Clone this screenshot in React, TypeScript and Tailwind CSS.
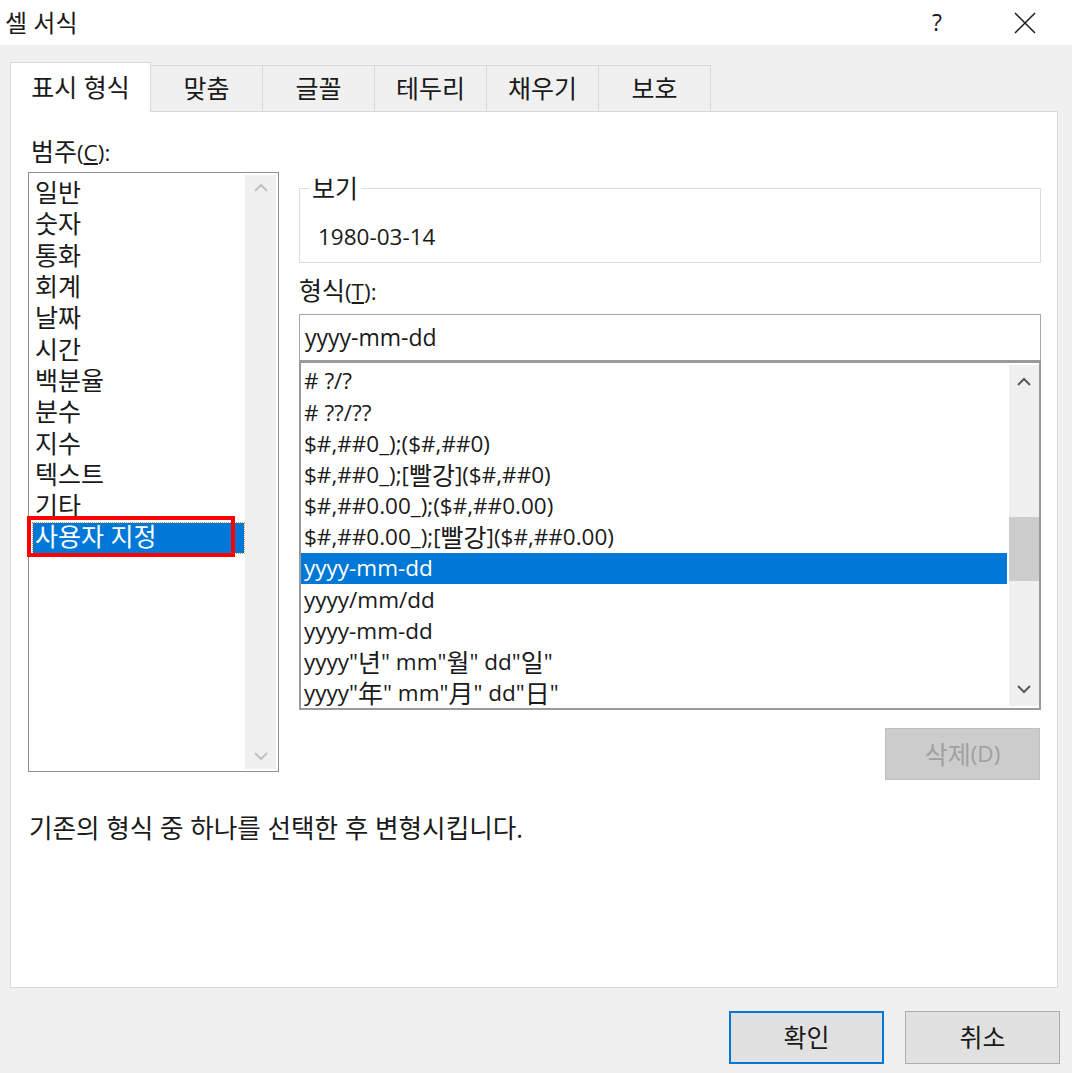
import React from "react";

const font = { fontFamily: '"Open Sans", "Noto Sans CJK KR", sans-serif' };

const categories = ["일반", "숫자", "통화", "회계", "날짜", "시간", "백분율", "분수", "지수", "텍스트", "기타", "사용자 지정"];

const formats = [
  "# ?/?",
  "# ??/??",
  "$#,##0_);($#,##0)",
  "$#,##0_);[빨강]($#,##0)",
  "$#,##0.00_);($#,##0.00)",
  "$#,##0.00_);[빨강]($#,##0.00)",
  "yyyy-mm-dd",
  "yyyy/mm/dd",
  "yyyy-mm-dd",
  'yyyy"년" mm"월" dd"일"',
  'yyyy"年" mm"月" dd"日"',
];

const tabs = ["맞춤", "글꼴", "테두리", "채우기", "보호"];

// Hangul / CJK runs get a slightly larger size so they sit like Malgun Gothic next to Latin text
function K({ text }: { text: string }) {
  const parts = text.split(/([\uAC00-\uD7A3\u3131-\u318E\u4E00-\u9FFF ]*[\uAC00-\uD7A3\u3131-\u318E\u4E00-\u9FFF]+)/);
  return (
    <>
      {parts.map((p, i) =>
        /[\uAC00-\uD7A3\u3131-\u318E\u4E00-\u9FFF]/.test(p) ? (
          <span key={i} className="text-[1.11em]">
            {p}
          </span>
        ) : (
          <React.Fragment key={i}>{p}</React.Fragment>
        )
      )}
    </>
  );
}

function Chevron({ up, color }: { up?: boolean; color: string }) {
  return (
    <svg width="16" height="10" viewBox="0 0 16 10">
      <polyline
        points={up ? "2,8 8,2 14,8" : "2,2 8,8 14,2"}
        fill="none"
        stroke={color}
        strokeWidth="2"
      />
    </svg>
  );
}

export default function App() {
  return (
    <div className="w-[1072px] h-[1073px] bg-[#f0f0f0] text-[#1a1a1a] overflow-hidden text-[22.5px]" style={font}>
      {/* Title bar */}
      <div className="h-[45px] bg-white flex items-center">
        <span className="pl-[5px] text-[24px] leading-none">셀 서식</span>
        <span className="ml-auto text-[23px] leading-none mr-[72px]">?</span>
        <svg width="22" height="22" viewBox="0 0 22 22" className="mr-[36px]">
          <path d="M1 1 L21 21 M21 1 L1 21" stroke="#1a1a1a" strokeWidth="1.5" />
        </svg>
      </div>

      {/* Tabs */}
      <div className="flex items-end pl-[10px] pt-[17px] h-[66px]">
        <div className="w-[141px] h-[50px] bg-white border border-b-0 border-[#d9d9d9] flex items-center justify-center text-[25px] leading-none relative z-10 -mb-px">
          표시 형식
        </div>
        {tabs.map((t) => (
          <div
            key={t}
            className="w-[112px] h-[46px] border border-l-0 border-b-0 border-[#d9d9d9] flex items-center justify-center text-[25px] leading-none"
          >
            {t}
          </div>
        ))}
      </div>

      {/* Panel */}
      <div className="mx-[10px] w-[1048px] h-[877px] bg-white border border-[#d9d9d9]">
        <div className="flex pl-[17px] pt-[25px]">
          {/* Left column */}
          <div className="w-[251px]">
            <div className="leading-[28px] h-[28px] pl-[3px]">
              <span className="text-[1.11em]">범주</span>(<span className="underline underline-offset-2">C</span>):
            </div>
            <div className="mt-[7px] h-[600px] border border-[#8e8f8f] flex">
              <div className="flex-1 pl-[5px] pt-[4px]">
                {categories.map((c, i) =>
                  i === categories.length - 1 ? (
                    <div key={c} className="relative h-[31.3px] flex items-center">
                      <div className="absolute left-[-1px] w-[211px] top-[2px] bottom-[0px] bg-[#0078d7] outline-1 outline-dotted outline-[#e0a050]" />
                      <span className="relative text-white text-[25px] leading-none pl-[1px]">{c}</span>
                      <div className="absolute left-[-7px] top-[-5px] w-[208px] h-[41px] border-[4px] border-[#ff0000]" />
                    </div>
                  ) : (
                    <div key={c} className="h-[31.3px] flex items-center text-[25px] leading-none pl-[1px]">
                      {c}
                    </div>
                  )
                )}
              </div>
              <div className="w-[31px] my-[2px] mr-[2px] bg-[#f0f0f0] flex flex-col items-center justify-between py-[8px]">
                <Chevron up color="#c2c2c2" />
                <Chevron color="#c2c2c2" />
              </div>
            </div>
          </div>

          {/* Right column */}
          <div className="ml-[20px] w-[742px] pt-[39px]">
            <fieldset className="border border-[#dcdcdc] h-[87px] pl-[18px]">
              <legend className="text-[25px] leading-[24px] px-[3px] ml-[-9px]">보기</legend>
              <div className="leading-none pt-[26px]">1980-03-14</div>
            </fieldset>
            <div className="leading-[28px] h-[28px] mt-[13px]">
              <span className="text-[1.11em]">형식</span>(<span className="underline underline-offset-2">T</span>):
            </div>
            <div className="mt-[10px] h-[46px] border border-[#a8a8a8] border-b-0 flex items-center pl-[5px] text-[23px]">
              yyyy-mm-dd
            </div>
            <div className="h-[350px] border-2 border-[#9a9a9a] border-t-[3px] flex">
              <div className="flex-1 pt-[3px]">
                {formats.map((f, i) => (
                  <div
                    key={i}
                    className={`h-[31.2px] flex items-center pl-[3px] leading-none whitespace-nowrap ${
                      i === 6 ? "bg-[#0078d7] text-white" : ""
                    }`}
                  >
                    <K text={f} />
                  </div>
                ))}
              </div>
              <div className="w-[30px] my-[2px] ml-[2px] bg-[#f0f0f0] flex flex-col">
                <div className="h-[34px] flex items-center justify-center">
                  <Chevron up color="#5a5a5a" />
                </div>
                <div className="h-[118px]" />
                <div className="h-[64px] bg-[#cdcdcd]" />
                <div className="flex-1" />
                <div className="h-[34px] flex items-center justify-center">
                  <Chevron color="#5a5a5a" />
                </div>
              </div>
            </div>
            <div className="flex justify-end mt-[18px] mr-[1px]">
              <div className="w-[155px] h-[52px] bg-[#cccccc] border border-[#bfbfbf] flex items-center justify-center text-[#a0a0a0] leading-none">
                <span className="text-[1.11em]">삭제</span>(D)
              </div>
            </div>
          </div>
        </div>
        <div className="pl-[18px] mt-[36px] text-[25.6px] leading-none">
          기존의 형식 중 하나를 선택한 후 변형시킵니다.
        </div>
      </div>

      {/* Footer buttons */}
      <div className="flex justify-end gap-[21px] pr-[12px] pt-[23px]">
        <div className="w-[155px] h-[53px] bg-[#e1e1e1] border-2 border-[#0078d7] flex items-center justify-center text-[25px] leading-none">
          확인
        </div>
        <div className="w-[155px] h-[53px] bg-[#e1e1e1] border border-[#adadad] flex items-center justify-center text-[25px] leading-none">
          취소
        </div>
      </div>
    </div>
  );
}
